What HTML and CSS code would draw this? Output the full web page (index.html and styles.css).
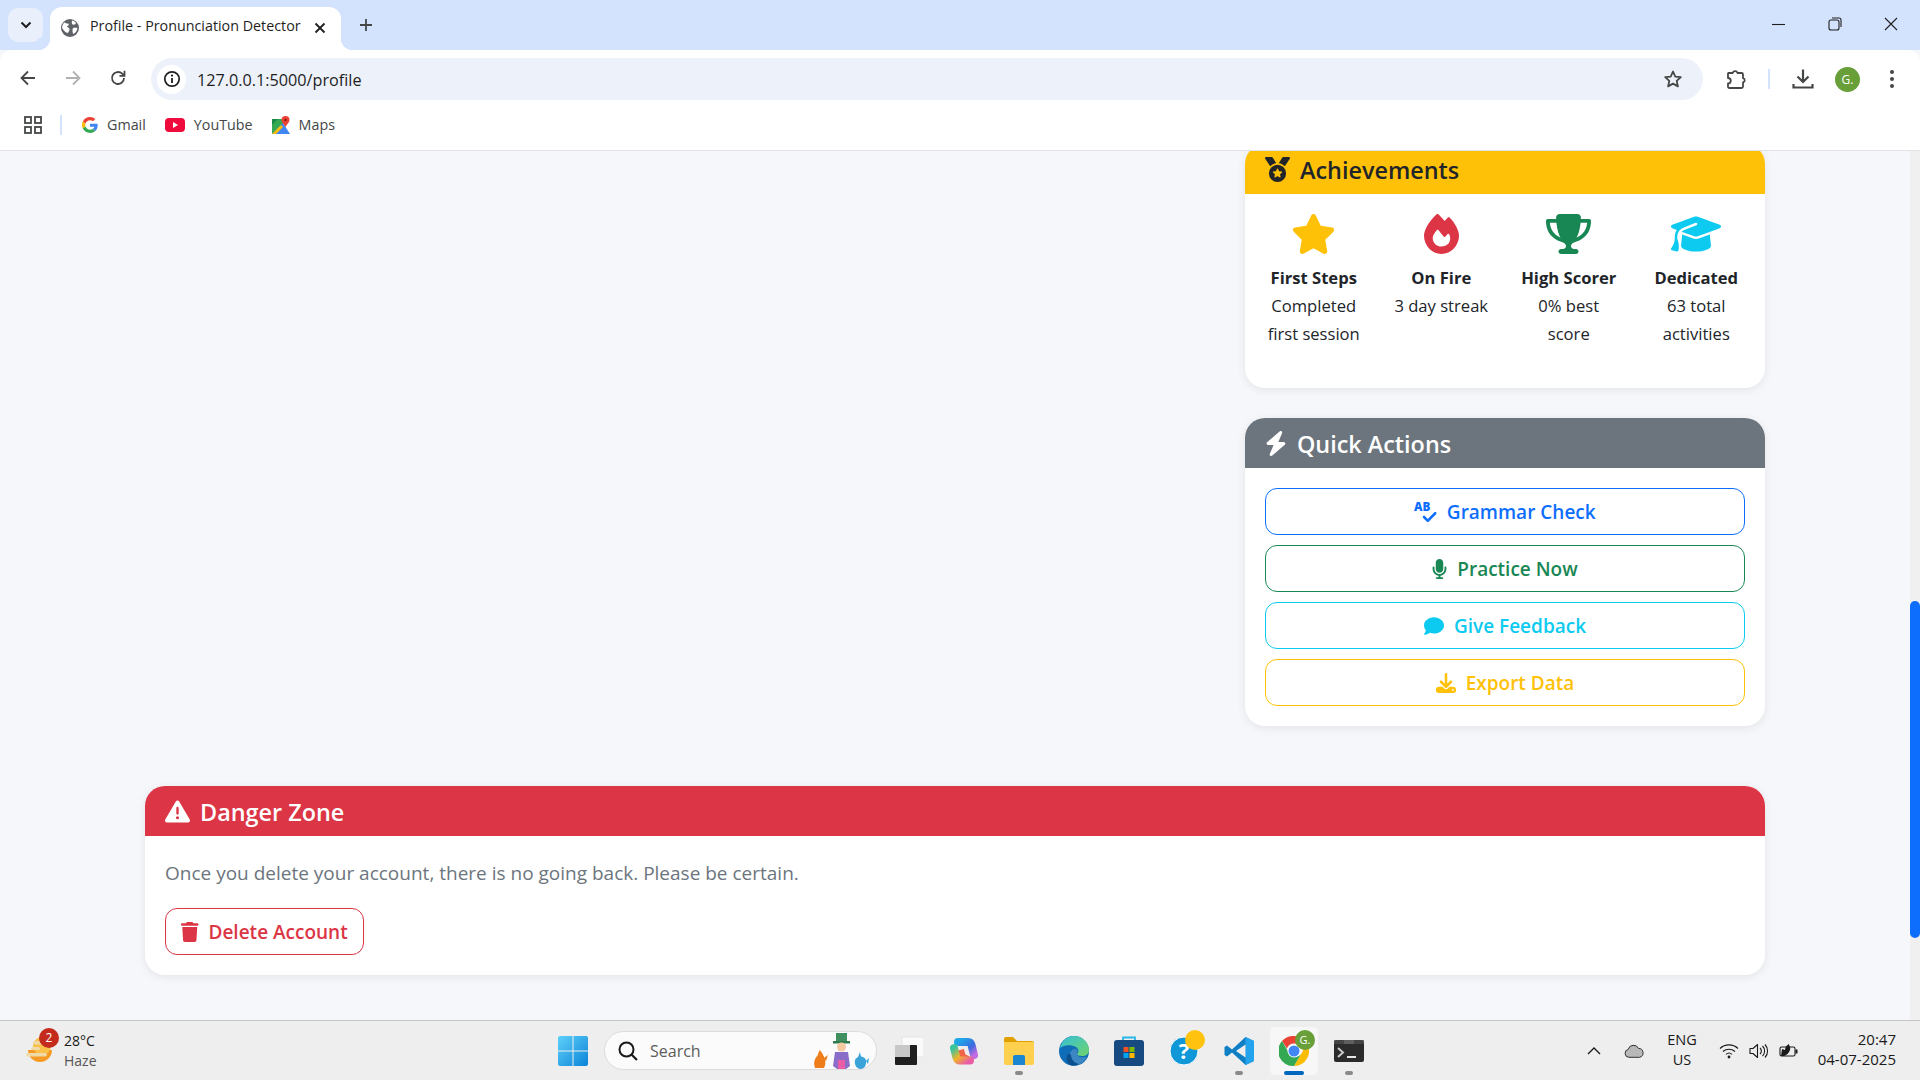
FILE: index.html
```html
<!DOCTYPE html>
<html lang="en">
<head>
  <meta charset="UTF-8" />
  <title>Profile - Pronunciation Detector</title>
  <link rel="stylesheet" href="styles.css">
</head>
<body>

  <!-- browser chrome -->
  <header class="tabstrip">
    <button class="tab-search"><svg width="12" height="8" viewBox="0 0 12 8"><path d="M1.5 1.5 6 6l4.5-4.5" fill="none" stroke="#1f1f1f" stroke-width="2"/></svg></button>
    <div class="tab">
      <svg class="tab-favicon" width="18" height="18" viewBox="0 0 18 18"><circle cx="9" cy="9" r="9" fill="#5f6368"/><path d="M3 3.5c2 .5 3 1.500 4.500 1 1 1.500-.5 2.500-2 3 1.500 1 3 1 3 3 0 1.500-1 2-1.500 3.500C5 14 2 11 1 8.500c.5-2 1-3.500 2-5zM11 1.500c1.500 0 3 1 4 2.500-.5 1.500-2 2-3 1.500-1 0-1.500-1-1-4zM12 9c1.500-.5 3-.5 4.500 0-.5 3-2 5-4 6-1-1-1.500-4-.5-6z" fill="#fff"/></svg>
      <span class="tab-title">Profile - Pronunciation Detector</span>
      <svg class="tab-close" width="12" height="12" viewBox="0 0 12 12"><path d="M1.500 1.500l9 9M10.500 1.500l-9 9" stroke="#1f1f1f" stroke-width="1.800"/></svg>
    </div>
    <svg class="tab-new" width="14" height="14" viewBox="0 0 14 14"><path d="M7 1v12M1 7h12" stroke="#444746" stroke-width="1.800"/></svg>
    <div class="window-controls">
      <svg width="14" height="14" viewBox="0 0 14 14"><path d="M0 7.500h13" stroke="#1f1f1f" stroke-width="1.100"/></svg>
      <svg width="14" height="14" viewBox="0 0 14 14"><rect x="1" y="3" width="10" height="10" rx="2" fill="none" stroke="#1f1f1f" stroke-width="1.100"/><path d="M4 1h7a2 2 0 0 1 2 2v7" fill="none" stroke="#1f1f1f" stroke-width="1.100"/></svg>
      <svg width="14" height="14" viewBox="0 0 14 14"><path d="M1 1l12 12M13 1 1 13" stroke="#1f1f1f" stroke-width="1.100"/></svg>
    </div>
  </header>

  <nav class="toolbar">
    <svg class="nav-icon" width="18" height="18" viewBox="0 0 18 18"><path d="M16 9H3M9 2.500 2.500 9 9 15.500" fill="none" stroke="#444746" stroke-width="1.800"/></svg>
    <svg class="nav-icon" width="18" height="18" viewBox="0 0 18 18"><path d="M2 9h13M9 2.500 15.500 9 9 15.500" fill="none" stroke="#b0b1b2" stroke-width="1.800"/></svg>
    <svg class="nav-icon" width="18" height="18" viewBox="0 0 18 18"><path d="M15 9a6 6 0 1 1-1.800-4.300L15 6.500M15.500 1.800v5h-5" fill="none" stroke="#444746" stroke-width="1.800"/></svg>
    <div class="omnibox">
      <span class="site-info"><svg width="18" height="18" viewBox="0 0 18 18"><circle cx="9" cy="9" r="7.200" fill="none" stroke="#1f1f1f" stroke-width="1.700"/><path d="M9 8v5" stroke="#1f1f1f" stroke-width="1.800"/><circle cx="9" cy="5.600" r="1.100" fill="#1f1f1f"/></svg></span>
      <span class="url">127.0.0.1:5000/profile</span>
      <svg class="bookmark-star" width="20" height="20" viewBox="0 0 20 20"><path d="M10 2.500l2.300 5.100 5.500.6-4.100 3.700 1.200 5.500L10 14.600l-4.900 2.800 1.200-5.500-4.100-3.700 5.500-.6z" fill="none" stroke="#444746" stroke-width="1.800" stroke-linejoin="round"/></svg>
    </div>
    <div class="toolbar-actions">
      <svg class="ext-icon" width="22" height="22" viewBox="0 0 22 22"><path d="M2.500 5h4.200a2.500 2.500 0 0 1 4.800 0h4a1.500 1.500 0 0 1 1.500 1.500v3.700a2.200 2.200 0 0 1 0 4.300v4a1.500 1.500 0 0 1-1.500 1.500H3.500A1.500 1.500 0 0 1 2 19v-3.500a2.700 2.700 0 0 0 0-5.500V5.500z" fill="none" stroke="#444746" stroke-width="1.800" stroke-linejoin="round"/></svg>
      <span class="toolbar-sep"></span>
      <svg class="dl-icon" width="22" height="22" viewBox="0 0 22 22"><path d="M11 1.500V14M5.500 8.500 11 14l5.500-5.500M1.500 16v3.500h19V16" fill="none" stroke="#444746" stroke-width="2.200"/></svg>
      <span class="avatar">G.</span>
      <svg class="menu-icon" width="6" height="20" viewBox="0 0 6 20"><circle cx="3" cy="3" r="2" fill="#444746"/><circle cx="3" cy="10" r="2" fill="#444746"/><circle cx="3" cy="17" r="2" fill="#444746"/></svg>
    </div>
  </nav>

  <nav class="bookmarks">
    <svg class="apps-icon" width="18" height="18" viewBox="0 0 18 18"><g fill="none" stroke="#444746" stroke-width="1.800"><rect x="1" y="1" width="6" height="6"/><rect x="11" y="1" width="6" height="6"/><rect x="1" y="11" width="6" height="6"/><rect x="11" y="11" width="6" height="6"/></g></svg>
    <span class="bookmarks-sep"></span>
    <a class="bookmark bookmark-gmail">
      <svg width="16" height="16" viewBox="0 0 48 48"><path fill="#ea4335" d="M24 9.500c3.500 0 6.700 1.300 9.200 3.500l6.800-6.800C35.900 2.400 30.300 0 24 0 14.600 0 6.500 5.400 2.600 13.200l8 6.200C12.400 13.700 17.700 9.500 24 9.500z"/><path fill="#4285f4" d="M47 24.500c0-1.600-.2-3.100-.4-4.500H24v9h12.900c-.6 3-2.200 5.500-4.700 7.200l7.700 6C44.400 38 47 31.800 47 24.500z"/><path fill="#fbbc05" d="M10.500 28.600A14.500 14.500 0 0 1 10.500 19.400l-8-6.200a24 24 0 0 0 0 21.600z"/><path fill="#34a853" d="M24 48c6.500 0 11.900-2.100 15.900-5.800l-7.700-6c-2.200 1.500-4.900 2.300-8.200 2.300-6.300 0-11.600-4.200-13.500-9.900l-8 6.200C6.500 42.600 14.600 48 24 48z"/></svg>
      Gmail
    </a>
    <a class="bookmark bookmark-youtube">
      <svg width="20" height="14" viewBox="0 0 20 14"><rect width="20" height="14" rx="4" fill="#f00b3d"/><path d="M8 4l5 3-5 3z" fill="#fff"/></svg>
      YouTube
    </a>
    <a class="bookmark bookmark-maps">
      <svg width="18" height="18" viewBox="0 0 18 18"><path d="M0 3h11v15H0z" fill="#34a853"/><path d="M0 18 11 7l7 11z" fill="#4285f4"/><path d="M0 18 9 9l2 2-7 7z" fill="#fbbc05"/><path d="M0 3h6L0 9z" fill="#1a8a4a"/><path d="M13.500 0A4 4 0 0 1 17.500 4c0 2.500-2.500 4-4 7-1.500-3-4-4.500-4-7a4 4 0 0 1 4-4z" fill="#ea4335"/><circle cx="13.500" cy="4" r="1.300" fill="#8c1c13"/></svg>
      Maps
    </a>
  </nav>

  <!-- page -->
  <div class="viewport">
    <main class="page">
      <div class="profile-row">
        <div class="profile-main"></div>
        <aside class="profile-side">

          <section class="card">
            <h5 class="card-header bg-warning">
              <svg class="head-icon" viewBox="0 0 512 512"><path d="M4.100 38.200C1.400 34.200 0 29.400 0 24.600C0 11 11 0 24.600 0H133.900c11.200 0 21.700 5.900 27.400 15.500l68.500 114.100c-48.200 6.100-91.300 28.600-123.400 61.900L4.100 38.200zm503.700 0L405.600 191.500c-32.100-33.300-75.200-55.800-123.400-61.900L350.700 15.500C356.500 5.900 366.900 0 378.100 0H487.400C501 0 512 11 512 24.600c0 4.800-1.400 9.600-4.100 13.600zM80 336a176 176 0 1 1 352 0A176 176 0 1 1 80 336zm184.400-94.900c-3.400-7-13.300-7-16.800 0l-22.400 45.400c-1.400 2.800-4 4.700-7 5.100L168 298.900c-7.700 1.100-10.700 10.500-5.200 16l36.300 35.400c2.200 2.200 3.200 5.200 2.700 8.300l-8.600 49.900c-1.300 7.600 6.700 13.500 13.600 9.900l44.800-23.600c2.700-1.400 6-1.400 8.700 0l44.800 23.600c6.900 3.600 14.900-2.200 13.600-9.900l-8.600-49.900c-.5-3 .5-6.100 2.700-8.300l36.300-35.400c5.600-5.400 2.500-14.800-5.200-16l-50.100-7.300c-3-.4-5.700-2.400-7-5.100l-22.400-45.400z"/></svg>
              Achievements
            </h5>
            <div class="card-body">
              <div class="badge-row">
                <div class="badge-item">
                  <svg class="badge-icon text-warning" viewBox="0 0 576 512"><path d="M316.900 18C311.600 7 300.400 0 288.100 0s-23.400 7-28.800 18L195 150.300 51.400 171.500c-12 1.800-22 10.200-25.700 21.700s-.7 24.200 7.900 32.700L137.800 329 113.200 474.700c-2 12 3 24.200 12.900 31.300s23 8 33.800 2.300l128.300-68.500 128.300 68.500c10.800 5.700 23.900 4.900 33.800-2.300s14.900-19.300 12.900-31.300L438.500 329 542.700 225.900c8.600-8.500 11.700-21.200 7.900-32.700s-13.700-19.900-25.700-21.700L381.200 150.300 316.900 18z"/></svg>
                  <strong>First Steps</strong>
                  <span>Completed first session</span>
                </div>
                <div class="badge-item">
                  <svg class="badge-icon text-danger" viewBox="0 0 448 512"><path d="M159.300 5.400c7.800-7.300 19.900-7.200 27.700 .1c27.600 25.900 53.500 53.800 77.700 84c11-14.400 23.500-30.100 37-42.900c7.900-7.400 20.100-7.400 28 .1c34.600 33 63.900 76.600 84.500 118c20.300 40.800 33.800 82.500 33.800 111.900C448 404.200 348.200 512 224 512C98.400 512 0 404.100 0 276.500c0-38.400 17.800-85.300 45.400-131.700C73.300 97.700 112.700 48.600 159.300 5.400zM225.700 416c25.300 0 47.700-7 68.800-21c42.100-29.400 53.400-88.200 28.100-134.400c-4.500-9-16-9.600-22.500-2l-25.200 29.300c-6.600 7.600-18.500 7.400-24.700-.5c-16.500-21-46-58.500-62.800-79.800c-6.300-8-18.300-8.100-24.700-.1c-33.800 42.500-50.800 69.300-50.800 99.400C112 375.400 162.600 416 225.700 416z"/></svg>
                  <strong>On Fire</strong>
                  <span>3 day streak</span>
                </div>
                <div class="badge-item">
                  <svg class="badge-icon text-success" viewBox="0 0 576 512"><path d="M400 0H176c-26.500 0-48.100 21.800-47.100 48.200c.2 5.300 .4 10.600 .7 15.800H24C10.700 64 0 74.700 0 88c0 92.600 33.500 157 78.500 200.700c44.300 43.100 98.300 64.800 138.100 75.800c23.400 6.500 39.400 26 39.400 45.600c0 20.900-17 37.900-37.900 37.900H192c-17.700 0-32 14.300-32 32s14.300 32 32 32H384c17.700 0 32-14.300 32-32s-14.300-32-32-32H357.900C337 448 320 431 320 410.100c0-19.600 15.900-39.200 39.400-45.600c39.900-11 93.900-32.700 138.200-75.800C542.500 245 576 180.600 576 88c0-13.300-10.700-24-24-24H446.400c.3-5.200 .5-10.400 .7-15.800C448.100 21.800 426.500 0 400 0zM48.900 112h84.400c9.100 90.100 29.200 150.300 51.900 190.600c-24.900-11-50.800-26.500-73.200-48.300c-32-31.100-58-76-63-142.300zM464.100 254.300c-22.400 21.800-48.300 37.300-73.200 48.300c22.700-40.300 42.800-100.500 51.900-190.600h84.400c-5.100 66.300-31.100 111.200-63 142.300z"/></svg>
                  <strong>High Scorer</strong>
                  <span>0% best score</span>
                </div>
                <div class="badge-item">
                  <svg class="badge-icon text-info" viewBox="0 0 640 512"><path d="M320 32c-8.100 0-16.100 1.400-23.700 4.100L15.800 137.400C6.300 140.900 0 149.900 0 160s6.300 19.100 15.800 22.600l57.900 20.900C57.300 229.300 48 259.800 48 291.900v28.100c0 28.400-10.800 57.700-22.300 80.800c-6.500 13-13.900 25.800-22.500 37.600C0 442.700-.9 448.300 .9 453.400s6 8.900 11.200 10.200l64 16c4.200 1.100 8.700 .3 12.400-2s6.300-6.100 7.100-10.400c8.600-42.800 4.300-81.200-2.100-108.700C90.300 344.300 86 329.800 80 316.500V291.900c0-30.200 10.200-58.700 27.900-81.500c12.900-15.500 29.600-28 49.200-35.700l157-61.700c8.200-3.200 17.500 .8 20.700 9s-.8 17.500-9 20.700l-157 61.700c-12.400 4.900-23.300 12.400-32.200 21.600l159.600 57.600c7.600 2.700 15.600 4.100 23.700 4.100s16.100-1.400 23.700-4.100L624.200 182.600c9.500-3.400 15.800-12.500 15.800-22.600s-6.300-19.100-15.800-22.600L343.700 36.100C336.100 33.400 328.100 32 320 32zM128 408c0 35.300 86 72 192 72s192-36.700 192-72L496.700 262.600 354.500 314c-11.100 4-22.800 6-34.500 6s-23.500-2-34.500-6L143.300 262.600 128 408z"/></svg>
                  <strong>Dedicated</strong>
                  <span>63 total activities</span>
                </div>
              </div>
            </div>
          </section>

          <section class="card">
            <h5 class="card-header bg-secondary">
              <svg class="head-icon" viewBox="0 0 448 512"><path d="M349.400 44.600c5.900-13.700 1.500-29.700-10.600-38.500s-28.600-8-39.900 1.800l-256 224c-10 8.800-13.600 22.900-8.900 35.300S50.700 288 64 288H175.500L98.600 467.400c-5.900 13.700-1.500 29.700 10.600 38.500s28.600 8 39.900-1.800l256-224c10-8.800 13.600-22.900 8.900-35.300s-16.600-20.700-30-20.700H272.500L349.400 44.600z"/></svg>
              Quick Actions
            </h5>
            <div class="card-body action-list">
              <a class="btn btn-primary">
                <svg class="btn-icon" viewBox="0 0 576 512"><text x="0" y="240" class="spell-text">AB</text><path d="M566.600 310.600c12.500-12.500 12.500-32.800 0-45.300s-32.800-12.500-45.300 0L352 434.700l-73.400-73.400c-12.500-12.500-32.800-12.500-45.300 0s-12.500 32.800 0 45.300l96 96c12.500 12.500 32.800 12.500 45.300 0l192-192z"/></svg>
                Grammar Check
              </a>
              <a class="btn btn-success">
                <svg class="btn-icon" viewBox="0 0 384 512"><path d="M192 0C139 0 96 43 96 96V256c0 53 43 96 96 96s96-43 96-96V96c0-53-43-96-96-96zM64 216c0-13.300-10.700-24-24-24s-24 10.700-24 24v40c0 89.100 66.200 162.700 152 174.400V464H120c-13.300 0-24 10.700-24 24s10.700 24 24 24h72 72c13.300 0 24-10.700 24-24s-10.700-24-24-24H216V430.400c85.800-11.700 152-85.300 152-174.400V216c0-13.300-10.700-24-24-24s-24 10.700-24 24v40c0 70.700-57.300 128-128 128s-128-57.300-128-128V216z"/></svg>
                Practice Now
              </a>
              <a class="btn btn-info">
                <svg class="btn-icon" viewBox="0 0 512 512"><path d="M512 240c0 114.900-114.600 208-256 208c-37.100 0-72.300-6.400-104.100-17.900c-11.900 8.700-31.300 20.600-54.300 30.600C73.600 471.100 44.700 480 16 480c-6.500 0-12.300-3.900-14.800-9.900c-2.500-6-1.100-12.800 3.400-17.400c.3-.3 .7-.7 1.300-1.400c1.100-1.200 2.800-3.100 4.900-5.700c4.100-5 9.600-12.400 15.200-21.600c10-16.600 19.500-38.400 21.400-62.900C17.700 326.800 0 285.100 0 240C0 125.100 114.600 32 256 32s256 93.100 256 208z"/></svg>
                Give Feedback
              </a>
              <a class="btn btn-warning">
                <svg class="btn-icon" viewBox="0 0 512 512"><path d="M288 32c0-17.700-14.300-32-32-32s-32 14.300-32 32V274.700l-73.400-73.400c-12.500-12.500-32.800-12.500-45.300 0s-12.500 32.800 0 45.300l128 128c12.500 12.500 32.800 12.500 45.300 0l128-128c12.500-12.500 12.500-32.800 0-45.300s-32.800-12.500-45.300 0L288 274.700V32zM64 352c-35.300 0-64 28.700-64 64v32c0 35.300 28.700 64 64 64H448c35.300 0 64-28.700 64-64V416c0-35.300-28.700-64-64-64H346.500l-45.300 45.300c-25 25-65.500 25-90.500 0L165.500 352H64zm368 56a24 24 0 1 1 0 48 24 24 0 1 1 0-48z"/></svg>
                Export Data
              </a>
            </div>
          </section>

        </aside>
      </div>

      <section class="card danger-card">
        <h5 class="card-header bg-danger">
          <svg class="head-icon" viewBox="0 0 512 512"><path d="M256 32c14.200 0 27.300 7.500 34.500 19.800l216 368c7.300 12.400 7.300 27.700 .2 40.100S486.300 480 472 480H40c-14.300 0-27.600-7.700-34.700-20.100s-7-27.800 .2-40.100l216-368C228.700 39.500 241.800 32 256 32zm0 128c-13.300 0-24 10.700-24 24V296c0 13.300 10.700 24 24 24s24-10.700 24-24V184c0-13.300-10.700-24-24-24zm32 224a32 32 0 1 0 -64 0 32 32 0 1 0 64 0z"/></svg>
          Danger Zone
        </h5>
        <div class="card-body">
          <p class="text-muted">Once you delete your account, there is no going back. Please be certain.</p>
          <a class="btn btn-danger btn-inline">
            <svg class="btn-icon" viewBox="0 0 448 512"><path d="M135.200 17.700L128 32H32C14.300 32 0 46.300 0 64S14.300 96 32 96H416c17.700 0 32-14.300 32-32s-14.300-32-32-32H320l-7.200-14.300C307.400 6.800 296.300 0 284.200 0H163.800c-12.100 0-23.200 6.800-28.600 17.700zM416 128H32L53.200 467c1.600 25.300 22.600 45 47.900 45H346.900c25.300 0 46.300-19.700 47.900-45L416 128z"/></svg>
            Delete Account
          </a>
        </div>
      </section>
    </main>
    <div class="scrollbar"><div class="scrollbar-thumb"></div></div>
  </div>

  <!-- windows taskbar -->
  <footer class="taskbar">
    <div class="weather">
      <span class="weather-icon">
        <svg width="30" height="30" viewBox="0 0 30 30"><path d="M4 14h24a12 12 0 0 1-24 0z" fill="#f59a23"/><circle cx="18" cy="10" r="9" fill="#f9c04a"/><g fill="#efd9a7"><rect x="9" y="5" width="13" height="3.500" rx="1.700"/><rect x="7" y="11" width="9" height="3" rx="1.500"/><rect x="2" y="17" width="21" height="3.500" rx="1.700"/></g></svg>
        <span class="weather-badge">2</span>
      </span>
      <div class="weather-text"><div>28°C</div><div class="weather-sub">Haze</div></div>
    </div>

    <div class="task-slot">
      <svg width="30" height="30" viewBox="0 0 30 30"><defs><linearGradient id="winA" x1="0" y1="0" x2="1" y2="1"><stop offset="0" stop-color="#5fd0fa"/><stop offset="1" stop-color="#0a84d8"/></linearGradient></defs><path d="M0 2a2 2 0 0 1 2-2h12.500v14.500H0zM15.500 0H28a2 2 0 0 1 2 2v12.500H15.500zM0 15.500h14.500V30H2a2 2 0 0 1-2-2zM15.500 15.500H30V28a2 2 0 0 1-2 2H15.500z" fill="url(#winA)"/></svg>
    </div>

    <div class="search-pill">
      <svg width="22" height="22" viewBox="0 0 22 22"><circle cx="9.500" cy="9.500" r="7" fill="none" stroke="#1a1a1a" stroke-width="2"/><path d="M14.500 14.500 20 20" stroke="#1a1a1a" stroke-width="2.200"/></svg>
      <span class="search-text">Search</span>
      <svg class="search-art" width="56" height="38" viewBox="0 0 56 38"><path d="M2 36c-2-6 0-10 3-13 0-2 1-4 2-5 1 2 2 2 3 5 3 4 3 9 1 13z" fill="#ef7d1a"/><path d="M11 26l4-3-2 6z" fill="#ef7d1a"/><rect x="23" y="1" width="11" height="9" fill="#3f8f5f"/><rect x="20" y="9" width="17" height="2.500" fill="#2f7a4d"/><circle cx="28.500" cy="15" r="4.500" fill="#f3c9a0"/><path d="M22 20h13l2 14-4 3h-9l-4-3z" fill="#8a6cc9"/><path d="M25 28h7v9h-7z" fill="#e85da6"/><path d="M42 28a6 6 0 0 1 11 0c1 5-2 9-5.500 9S41 33 42 28z" fill="#3aa3d8"/><path d="M47 20l1 5h-3z" fill="#3aa3d8"/><path d="M53 29l3-3-1 6z" fill="#3aa3d8"/></svg>
    </div>

    <div class="task-slot">
      <svg width="30" height="30" viewBox="0 0 30 30"><rect x="8" y="1" width="22" height="20" rx="1" fill="#fafafa" stroke="#e4e4e4"/><rect x="1" y="9" width="22" height="20" rx="1" fill="#1f1f1f"/><rect x="1" y="9" width="15" height="12" fill="#c8c8c8"/></svg>
    </div>
    <div class="task-slot">
      <svg width="30" height="30" viewBox="0 0 30 30"><defs><linearGradient id="copA" x1="0" y1="0" x2="1" y2="1"><stop offset="0" stop-color="#1fa7e8"/><stop offset=".6" stop-color="#3d6be0"/><stop offset="1" stop-color="#c36be0"/></linearGradient><linearGradient id="copB" x1="0" y1="0" x2="1" y2="1"><stop offset="0" stop-color="#37c5a0"/><stop offset=".5" stop-color="#f0b428"/><stop offset="1" stop-color="#e85da6"/></linearGradient></defs><path d="M11 14 13 21 19 24" fill="none" stroke="#f0644a" stroke-width="8"/><path d="M9 6h10c2 0 3 1 3.500 3L25 19" fill="none" stroke="url(#copA)" stroke-width="8" stroke-linecap="round"/><path d="M21 24.500H11c-2 0-3-1-3.500-3L5 12" fill="none" stroke="url(#copB)" stroke-width="8" stroke-linecap="round"/></svg>
    </div>
    <div class="task-slot task-running">
      <svg width="30" height="28" viewBox="0 0 30 28"><path d="M0 2a2 2 0 0 1 2-2h7l4 4h15a2 2 0 0 1 2 2v6H0z" fill="#e0a100"/><path d="M0 5h30v21a2 2 0 0 1-2 2H2a2 2 0 0 1-2-2z" fill="#ffd04e"/><path d="M9 20a2 2 0 0 1 2-2h8a2 2 0 0 1 2 2v8H9z" fill="#1c86d1"/></svg>
    </div>
    <div class="task-slot">
      <svg width="30" height="30" viewBox="0 0 30 30"><defs><linearGradient id="edgeA" x1="0" y1="0" x2="1" y2="1"><stop offset="0" stop-color="#35c1d9"/><stop offset="1" stop-color="#71d36b"/></linearGradient></defs><circle cx="15" cy="15" r="15" fill="#0f6db8"/><path d="M1 12C3 4 9 0 15 0c9 0 15 7 15 14 0 4-3 6-7 6-3 0-5-1-5-2 2-1 2-5-1-7-5-3-13-2-16 1z" fill="url(#edgeA)"/><path d="M11 19c0-3 2-6 5-6 2 0 3 2 2 4-1 3 3 5 8 4 2 0 2 1 0 3-3 3-7 6-11 6-3-2-4-7-4-11z" fill="#f0f0f0" opacity=".2"/><path d="M12 19c0 4 3 8 8 9-3 2-8 2-10 0-3-2-3-7-1-10 1 0 3 0 3 1z" fill="#0c4f8f"/></svg>
    </div>
    <div class="task-slot">
      <svg width="30" height="30" viewBox="0 0 30 30"><path d="M9 5V1.500h12V5" fill="none" stroke="#29b6e8" stroke-width="1.800"/><rect y="4" width="30" height="26" rx="3" fill="#174a80"/><rect x="9.500" y="11" width="5" height="5" fill="#f25022"/><rect x="15.500" y="11" width="5" height="5" fill="#7fba00"/><rect x="9.500" y="17" width="5" height="5" fill="#00a4ef"/><rect x="15.500" y="17" width="5" height="5" fill="#ffb900"/></svg>
    </div>
    <div class="task-slot task-help">
      <svg width="30" height="30" viewBox="0 0 30 30"><circle cx="15" cy="15" r="14" fill="#0f97d8" stroke="#fff"/><text x="15" y="23" class="help-mark">?</text></svg>
      <span class="help-dot"></span>
    </div>
    <div class="task-slot task-running">
      <svg width="30" height="30" viewBox="0 0 30 30"><path d="M21.500 1 30 5v20l-8.500 4L8 16.500 3 20.500.500 19v-8L3 9.500l5 4z" fill="#0f7fc4"/><path d="M21.500 1 30 5v20l-8.500 4z" fill="#23a3ee"/><path d="M21.500 8.500 12 15l9.500 6.500z" fill="#eee"/></svg>
    </div>
    <div class="task-slot task-active task-running">
      <svg width="30" height="30" viewBox="0 0 30 30"><path d="M15 0a15 15 0 0 1 13 7.500H15a7.500 7.500 0 0 0-7 5L3 5a15 15 0 0 1 12-5z" fill="#ea4335"/><path d="M28 7.500A15 15 0 0 1 15 30l6.500-11.250a7.500 7.500 0 0 0 0-11.250z" fill="#fbbc04"/><path d="M15 30A15 15 0 0 1 3 5l6.500 11.250A7.500 7.500 0 0 0 21.500 18.750z" fill="#34a853"/><circle cx="15" cy="15" r="6.500" fill="#fff"/><circle cx="15" cy="15" r="5.500" fill="#4285f4"/></svg>
      <span class="chrome-profile">G.</span>
    </div>
    <div class="task-slot task-running">
      <svg width="30" height="22" viewBox="0 0 30 22"><rect width="30" height="22" rx="2" fill="#2b2b2b"/><rect x="10" width="10" height="4" fill="#6b6b6b"/><rect width="30" height="4" fill="#555" opacity=".6"/><path d="M4 8l5 4.500L4 17" fill="none" stroke="#c9c9c9" stroke-width="2"/><path d="M13 17h9" stroke="#e6e6e6" stroke-width="2"/></svg>
    </div>

    <div class="tray">
      <span class="tray-slot tray-wide"><svg width="14" height="8" viewBox="0 0 14 8"><path d="M1 7l6-6 6 6" fill="none" stroke="#1a1a1a" stroke-width="1.400"/></svg></span>
      <span class="tray-slot tray-wide"><svg width="20" height="14" viewBox="0 0 20 14"><path d="M5 13.300a4 4 0 0 1-.8-7.900 5.500 5.500 0 0 1 10.300-1A4.500 4.500 0 0 1 15.500 13.300z" fill="#b8b8b8" stroke="#333" stroke-width="1"/></svg></span>
      <span class="tray-lang"><span>ENG</span><span>US</span></span>
      <span class="tray-slot"><svg width="20" height="16" viewBox="0 0 20 16"><g fill="none" stroke="#1a1a1a" stroke-width="1.100"><path d="M1 5.500a13 13 0 0 1 18 0"/><path d="M4 8.500a9 9 0 0 1 12 0"/><path d="M7 11.300a4.500 4.500 0 0 1 6 0"/></g><circle cx="10" cy="14" r="1.400" fill="#1a1a1a"/></svg></span>
      <span class="tray-slot"><svg width="20" height="16" viewBox="0 0 20 16"><path d="M1 5.500h3L8.500 1.500v13L4 10.500H1z" fill="none" stroke="#1a1a1a" stroke-width="1.100" stroke-linejoin="round"/><path d="M11 5a4 4 0 0 1 0 6M13.500 3a7 7 0 0 1 0 10M16 1.500a9.500 9.500 0 0 1 0 13" fill="none" stroke="#1a1a1a" stroke-width="1.100"/></svg></span>
      <span class="tray-slot"><svg width="20" height="16" viewBox="0 0 20 16"><rect x="1" y="4" width="15" height="9" rx="1.500" fill="none" stroke="#1a1a1a" stroke-width="1.100"/><rect x="16.500" y="6.500" width="2" height="4" fill="#1a1a1a"/><path d="M2 13 3 6l3 1c0-3 2-5 4-6 0 2 2 3 1 6-1 3-3 5-6 6z" fill="#1a1a1a"/></svg></span>
      <span class="clock"><span>20:47</span><span>04-07-2025</span></span>
    </div>
  </footer>

</body>
</html>
```

FILE: styles.css
```css
* {
  box-sizing: border-box;
}
html, body {
  height: 100%;
}
body {
  margin: 0;
  height: 1080px;
  display: flex;
  flex-direction: column;
  overflow: hidden;
  font-family: "Open Sans", "Liberation Sans", sans-serif;
  font-size: 19px;
  color: #212529;
  background-color: #f5f7fb;
}
svg {
  display: block;
  flex-shrink: 0;
}

/* tab strip */
.tabstrip {
  height: 50px;
  display: flex;
  align-items: flex-end;
  background-color: #d3e3fd;
  flex-shrink: 0;
}
.tab-search {
  width: 35px;
  height: 34px;
  margin: 0 7px 8px 8px;
  padding: 0;
  border: 0;
  border-radius: 10px;
  background-color: #e9f0fc;
  display: flex;
  align-items: center;
  justify-content: center;
}
.tab {
  width: 291px;
  height: 43px;
  display: flex;
  align-items: center;
  padding: 0 15px 1px 11px;
  background-color: #fff;
  border-radius: 12px 12px 0 0;
  position: relative;
}
.tab::before, .tab::after {
  content: "";
  position: absolute;
  bottom: 0;
  width: 12px;
  height: 12px;
  background: radial-gradient(circle at 0 0, #d3e3fd 12px, #fff 12.5px);
}
.tab::before {
  left: -12px;
}
.tab::after {
  right: -12px;
  background: radial-gradient(circle at 100% 0, #d3e3fd 12px, #fff 12.5px);
}
.tab-title {
  margin-left: 11px;
  flex: 1;
  font-size: 14.3px;
  color: #1f1f1f;
  white-space: nowrap;
  padding-bottom: 5px;
}
.tab-new {
  margin: 0 0 18px 18px;
}
.window-controls {
  margin-left: auto;
  display: flex;
  gap: 42px;
  padding: 0 22px 19px 0;
}

/* toolbar */
.toolbar {
  height: 50px;
  display: flex;
  align-items: flex-start;
  padding: 8px 0 0 19px;
  background-color: #fff;
  border-radius: 12px 12px 0 0;
  flex-shrink: 0;
}
.nav-icon {
  margin: 11px 27px 0 0;
}
.nav-icon:nth-child(3) {
  margin-right: 24px;
}
.omnibox {
  width: 1552px;
  height: 42px;
  display: flex;
  align-items: center;
  padding: 0 20px 0 6px;
  border-radius: 21px;
  background-color: #ecf1fa;
}
.site-info {
  width: 29px;
  height: 29px;
  border-radius: 50%;
  background-color: #fff;
  display: flex;
  align-items: center;
  justify-content: center;
}
.url {
  margin-left: 11px;
  padding-top: 1px;
  flex: 1;
  font-size: 16.2px;
  color: #1f1f1f;
}
.toolbar-actions {
  flex: 1;
  display: flex;
  align-items: center;
  height: 42px;
}
.ext-icon {
  margin-left: 23px;
}
.toolbar-sep {
  width: 2px;
  height: 20px;
  margin: 0 22px 0 20px;
  background-color: #d3e3fd;
}
.avatar {
  width: 25px;
  height: 25px;
  margin-left: 21px;
  border-radius: 50%;
  background-color: #689f38;
  color: #fff;
  font-size: 12px;
  display: flex;
  align-items: center;
  justify-content: center;
}
.menu-icon {
  margin-left: 29px;
}

/* bookmarks */
.bookmarks {
  height: 51px;
  display: flex;
  align-items: center;
  padding: 0 0 1px 24px;
  background-color: #fff;
  border-bottom: 1px solid #e1e3e6;
  flex-shrink: 0;
}
.bookmarks-sep {
  width: 2px;
  height: 20px;
  margin: 0 20px 0 18px;
  background-color: #d3e3fd;
}
.bookmark {
  display: flex;
  align-items: center;
  gap: 10px;
  font-size: 14.3px;
  color: #444746;
}
.bookmark-gmail {
  gap: 9px;
  margin-right: 19px;
}
.bookmark-youtube {
  gap: 9px;
  margin-right: 19px;
}
.bookmark-maps {
  gap: 9px;
}

/* page area */
.viewport {
  flex: 1;
  display: flex;
  overflow: hidden;
  min-height: 0;
}
.page {
  flex: 1;
  min-width: 0;
}
.scrollbar {
  width: 10px;
  background-color: #f0f0f0;
}
.scrollbar-thumb {
  width: 10px;
  height: 337px;
  margin-top: 450px;
  border-radius: 5px;
  background-color: #0d6efd;
}
.profile-row {
  width: 1620px;
  margin: -7px auto 0;
  display: grid;
  grid-template-columns: 1fr 520px;
}
.profile-side {
  display: flex;
  flex-direction: column;
  gap: 30px;
}

/* cards */
.card {
  background-color: #fff;
  border-radius: 20px;
  overflow: hidden;
  box-shadow: 0 2px 10px rgba(0,0,0,0.08);
}
.danger-card {
  width: 1620px;
  margin: 60px auto 0;
}
.card-header {
  margin: 0;
  height: 50px;
  padding: 1px 20px 0;
  display: flex;
  align-items: center;
  gap: 10px;
  font-size: 23.4px;
  font-weight: 600;
}
.head-icon {
  height: 25px;
  margin-top: -1px;
  fill: currentColor;
}
.card-body {
  padding: 20px;
}
.bg-warning {
  background-color: #ffc107;
  color: #212529;
}
.bg-secondary {
  background-color: #6c757d;
  color: #fff;
}
.bg-danger {
  background-color: #dc3545;
  color: #fff;
}
.text-warning { color: #ffc107; }
.text-danger { color: #dc3545; }
.text-success { color: #198754; }
.text-info { color: #0dcaf0; }
.text-muted {
  color: #6c757d;
  margin: 0 0 19px;
  padding-top: 1px;
  line-height: 32px;
}

/* achievements */
.badge-row {
  display: grid;
  grid-template-columns: repeat(4, 1fr);
  margin: 0 -15px 20px;
}
.badge-item {
  padding: 0 15px;
  display: flex;
  flex-direction: column;
  align-items: center;
  text-align: center;
  font-size: 16.6px;
  line-height: 28px;
}
.badge-item strong {
  font-weight: 700;
}
.badge-icon {
  height: 40px;
  fill: currentColor;
  margin-bottom: 10px;
}

/* buttons */
.action-list {
  display: flex;
  flex-direction: column;
  gap: 10px;
}
.btn {
  height: 47px;
  display: flex;
  align-items: center;
  justify-content: center;
  gap: 10px;
  border: 1px solid currentColor;
  border-radius: 12px;
  font-weight: 600;
}
.btn-icon {
  height: 20px;
  fill: currentColor;
  overflow: visible;
}
.spell-text {
  font-family: "Open Sans", sans-serif;
  font-size: 300px;
  font-weight: 800;
}
.btn-inline {
  display: inline-flex;
  padding: 0 15px;
}
.btn-primary { color: #0d6efd; }
.btn-success { color: #198754; }
.btn-info { color: #0dcaf0; }
.btn-warning { color: #ffc107; }
.btn-danger { color: #dc3545; }

/* taskbar */
.taskbar {
  height: 60px;
  flex-shrink: 0;
  display: flex;
  align-items: center;
  background-color: #eeeeee;
  border-top: 1px solid #c4c4c4;
  font-size: 14px;
  color: #1a1a1a;
}
.weather {
  width: 545px;
  display: flex;
  align-items: center;
  padding-left: 24px;
}
.weather-icon {
  position: relative;
  width: 40px;
}
.weather-badge {
  position: absolute;
  left: 15px;
  top: -8px;
  width: 20px;
  height: 20px;
  border-radius: 50%;
  background-color: #c42b1c;
  color: #fff;
  font-size: 12px;
  display: flex;
  align-items: center;
  justify-content: center;
}
.weather-text {
  line-height: 20px;
}
.weather-sub {
  color: #555;
}
.task-slot {
  width: 55px;
  height: 48px;
  display: flex;
  align-items: center;
  justify-content: center;
  position: relative;
}
.search-pill {
  width: 273px;
  height: 39px;
  margin: 0 4px;
  display: flex;
  align-items: center;
  padding: 0 7px 0 12px;
  background-color: #fbfbfb;
  border: 1px solid #dcdcdc;
  border-radius: 20px;
}
.search-text {
  margin-left: 11px;
  flex: 1;
  font-size: 16px;
  color: #5c5c5c;
}
.task-running::after {
  content: "";
  position: absolute;
  left: 50%;
  bottom: 0;
  width: 8px;
  height: 4px;
  margin-left: -4px;
  border-radius: 2px;
  background-color: #8a8a8a;
}
.task-active {
  width: 48px;
  margin: 0 3.5px;
  background-color: #f7f7f7;
  border-radius: 5px;
}
.task-active::after {
  width: 20px;
  margin-left: -10px;
  background-color: #0067c0;
}
.help-mark {
  font-family: "Open Sans", sans-serif;
  font-size: 22px;
  font-weight: 700;
  fill: #fff;
  text-anchor: middle;
}
.help-dot {
  position: absolute;
  left: 29px;
  top: 3px;
  width: 20px;
  height: 20px;
  border-radius: 50%;
  background-color: #ffc20e;
}
.chrome-profile {
  position: absolute;
  left: 25.5px;
  top: 3px;
  width: 20px;
  height: 20px;
  border-radius: 50%;
  background-color: #689f38;
  color: #fff;
  font-size: 11px;
  display: flex;
  align-items: center;
  justify-content: center;
}
.tray {
  margin-left: auto;
  display: flex;
  align-items: center;
  padding-right: 24px;
}
.tray-slot {
  width: 30px;
  display: flex;
  justify-content: center;
}
.tray-wide {
  width: 40px;
}
.tray-lang {
  width: 56px;
  margin-right: 4px;
  padding-bottom: 2px;
  display: flex;
  flex-direction: column;
  align-items: center;
  line-height: 20px;
  font-size: 14.5px;
}
.clock {
  width: 92px;
  padding-bottom: 3px;
  display: flex;
  flex-direction: column;
  align-items: flex-end;
  line-height: 20px;
  font-size: 15px;
}
```
